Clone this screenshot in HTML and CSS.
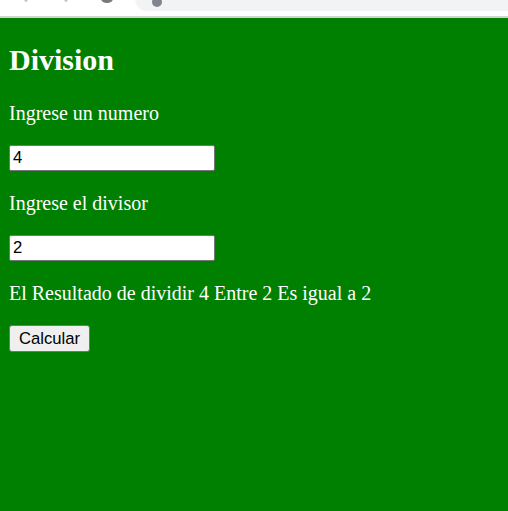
FILE: index.html
```html
<!DOCTYPE html>
<html>
<head>
<meta charset="utf-8">
<link rel="stylesheet" href="styles.css">
</head>
<body>
<div class="chrome">
  <span class="nav-dot d1"></span>
  <span class="nav-dot d2"></span>
  <span class="nav-dot d3"></span>
  <div class="omnibox"><span class="site-dot"></span></div>
</div>
<main class="page">
  <h2 class="title">Division</h2>
  <p class="label">Ingrese un numero</p>
  <p class="field"><input class="txt" type="text" value="4"></p>
  <p class="label">Ingrese el divisor</p>
  <p class="field"><input class="txt" type="text" value="2"></p>
  <p class="label">El Resultado de dividir 4 Entre 2 Es igual a 2</p>
  <p class="field"><button class="btn">Calcular</button></p>
</main>
</body>
</html>
```
FILE: styles.css
```css
html, body {
  margin: 0;
  padding: 0;
  height: 100%;
}
body {
  background: #008000;
  font-family: "Liberation Serif", "Times New Roman", serif;
  font-size: 20px;
  color: #ffffff;
  overflow: hidden;
}
.chrome {
  position: relative;
  height: 16px;
  background: #ffffff;
  border-bottom: 2px solid #d3d3d3;
}
.omnibox {
  position: absolute;
  left: 135px;
  top: -20px;
  right: 0;
  height: 31px;
  background: #f1f3f4;
  border-radius: 0 0 0 12px;
}
.site-dot {
  position: absolute;
  left: 17px;
  top: 17px;
  width: 10px;
  height: 10px;
  border-radius: 50%;
  background: #80868b;
}
.nav-dot {
  position: absolute;
  top: -6px;
  width: 9px;
  height: 8px;
  border-radius: 50%;
  background: #c6c6c6;
}
.d1 { left: 24px; width: 4px; }
.d2 { left: 64px; width: 4px; }
.d3 { left: 101px; background: #7a7a7a; width: 12px; height: 9px; }
.page {
  padding: 0 9px;
}
.title {
  font-size: 30px;
  font-weight: bold;
  margin: 25px 0;
}
.label {
  margin: 20px 0;
  line-height: 23px;
}
.field {
  margin: 20px 0;
  line-height: 27px;
  height: 27px;
}
.txt {
  box-sizing: border-box;
  width: 206px;
  height: 26px;
  margin: 0;
  padding: 1px 3px;
  border: 1px solid #767676;
  border-radius: 2px;
  background: #ffffff;
  color: #000000;
  font-family: "Liberation Sans", Arial, sans-serif;
  font-size: 16.67px;
  vertical-align: top;
}
.btn {
  box-sizing: border-box;
  width: 81px;
  height: 27px;
  margin: 0;
  padding: 0 7px;
  border: 1px solid #767676;
  border-radius: 3px;
  background: #efefef;
  color: #000000;
  font-family: "Liberation Sans", Arial, sans-serif;
  font-size: 16.67px;
  vertical-align: top;
}
```
